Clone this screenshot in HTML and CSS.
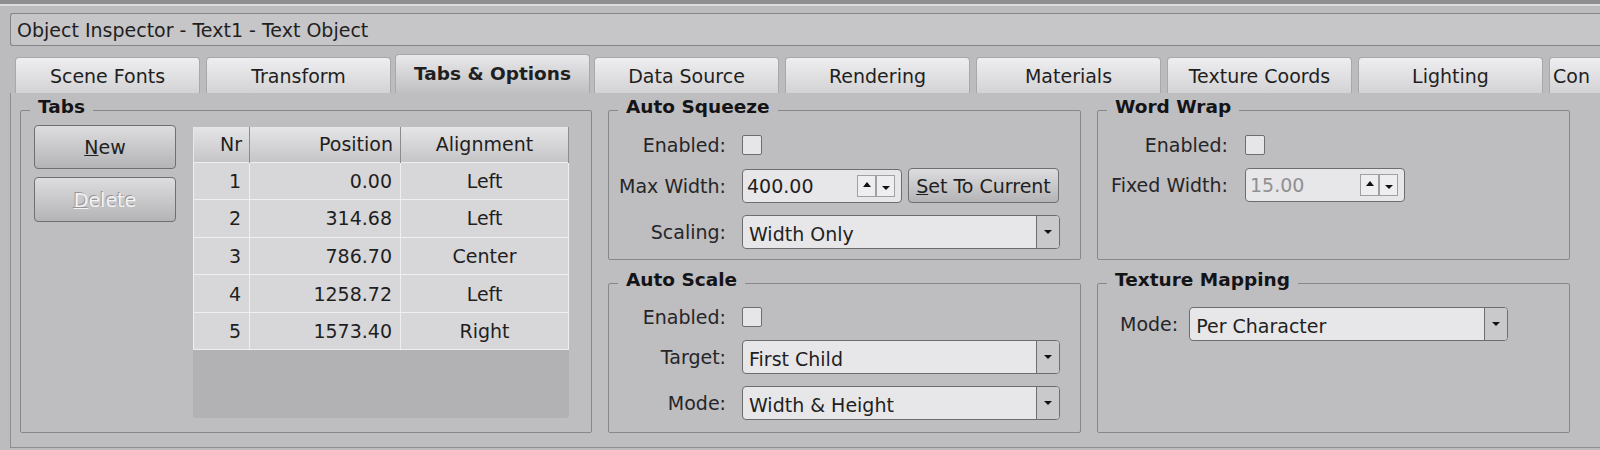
FILE: index.html
```html
<!DOCTYPE html>
<html lang="en">
<head>
	<meta charset="UTF-8">
	<title>Object Inspector</title>
	<link rel="stylesheet" href="styles.css">
</head>
<body>
	<div class="topline"></div>
	<div class="titlebar">Object Inspector - Text1 - Text Object</div>

	<ul class="tabs">
		<li class="tab">Scene Fonts</li>
		<li class="tab">Transform</li>
		<li class="tab active">Tabs &amp; Options</li>
		<li class="tab">Data Source</li>
		<li class="tab">Rendering</li>
		<li class="tab">Materials</li>
		<li class="tab">Texture Coords</li>
		<li class="tab">Lighting</li>
		<li class="tab last">Con</li>
	</ul>

	<div class="page">
		<fieldset class="group group-tabs">
			<legend>Tabs</legend>
			<div class="tabs-body">
				<div class="btn-col">
					<button class="btn"><u>N</u>ew</button>
					<button class="btn disabled"><u>D</u>elete</button>
				</div>
				<div class="grid">
					<table>
						<colgroup>
							<col class="c-nr">
							<col class="c-pos">
							<col class="c-al">
						</colgroup>
						<tr>
							<th class="r">Nr</th>
							<th class="r">Position</th>
							<th>Alignment</th>
						</tr>
						<tr><td class="r">1</td><td class="r">0.00</td><td>Left</td></tr>
						<tr><td class="r">2</td><td class="r">314.68</td><td>Left</td></tr>
						<tr><td class="r">3</td><td class="r">786.70</td><td>Center</td></tr>
						<tr><td class="r">4</td><td class="r">1258.72</td><td>Left</td></tr>
						<tr><td class="r">5</td><td class="r">1573.40</td><td>Right</td></tr>
					</table>
				</div>
			</div>
		</fieldset>

		<fieldset class="group squeeze">
			<legend>Auto Squeeze</legend>
			<div class="row first">
				<label class="lbl">Enabled:</label>
				<span class="check"></span>
			</div>
			<div class="row">
				<label class="lbl">Max Width:</label>
				<div class="spin">
					<span class="val">400.00</span>
					<span class="spin-btns"><span class="up"></span><span class="down"></span></span>
				</div>
				<button class="btn btn-set"><u>S</u>et To Current</button>
			</div>
			<div class="row">
				<label class="lbl">Scaling:</label>
				<div class="combo">
					<span class="val">Width Only</span>
					<span class="drop"></span>
				</div>
			</div>
		</fieldset>

		<fieldset class="group wrap">
			<legend>Word Wrap</legend>
			<div class="row first">
				<label class="lbl">Enabled:</label>
				<span class="check"></span>
			</div>
			<div class="row">
				<label class="lbl">Fixed Width:</label>
				<div class="spin off">
					<span class="val">15.00</span>
					<span class="spin-btns"><span class="up"></span><span class="down"></span></span>
				</div>
			</div>
		</fieldset>

		<fieldset class="group scale">
			<legend>Auto Scale</legend>
			<div class="row first">
				<label class="lbl">Enabled:</label>
				<span class="check"></span>
			</div>
			<div class="row">
				<label class="lbl">Target:</label>
				<div class="combo">
					<span class="val">First Child</span>
					<span class="drop"></span>
				</div>
			</div>
			<div class="row">
				<label class="lbl">Mode:</label>
				<div class="combo">
					<span class="val">Width &amp; Height</span>
					<span class="drop"></span>
				</div>
			</div>
		</fieldset>

		<fieldset class="group mapping">
			<legend>Texture Mapping</legend>
			<div class="row first">
				<label class="lbl">Mode:</label>
				<div class="combo">
					<span class="val">Per Character</span>
					<span class="drop"></span>
				</div>
			</div>
		</fieldset>
	</div>
</body>
</html>
```

FILE: styles.css
```css
* {
	margin: 0;
	padding: 0;
	box-sizing: border-box;
}
body {
	width: 1600px;
	height: 450px;
	overflow: hidden;
	background: #bcbbbe;
	font-family: "DejaVu Sans", sans-serif;
	font-size: 19px;
	color: #1f1f21;
}
.topline {
	height: 6px;
	background: #8e8e90;
	border-bottom: 2px solid #dcdcde;
}
.titlebar {
	margin: 7px 0 0 10px;
	height: 33px;
	padding: 1px 0 0 6px;
	line-height: 31px;
	background: #c6c5c8;
	border: 1px solid #858587;
	border-right: 0;
	border-radius: 3px 0 0 3px;
}

/* tab strip */
.tabs {
	display: flex;
	align-items: flex-end;
	height: 39px;
	margin-top: 8px;
	padding-left: 15px;
	overflow: hidden;
	list-style: none;
}
.tab {
	flex: none;
	width: 185px;
	height: 36px;
	margin-right: 6px;
	line-height: 36px;
	text-align: center;
	white-space: nowrap;
	background: linear-gradient(#eeeef0, #d3d3d5);
	border: 1px solid #a8a8aa;
	border-bottom: 0;
	border-radius: 4px 4px 0 0;
}
.tab.active {
	width: 195px;
	height: 39px;
	margin: 0 4px 0 -2px;
	line-height: 38px;
	font-size: 18.5px;
	font-weight: bold;
	background: linear-gradient(#e9e9eb, #c0bfc2);
}
.tab.last {
	flex: 1;
	text-align: left;
	padding-left: 3px;
	margin-right: 0;
	border-radius: 4px 0 0 0;
	border-right: 0;
}

/* page with group boxes */
.page {
	display: grid;
	grid-template-columns: 572px 473px 473px;
	grid-template-rows: 163px 163px;
	column-gap: 16px;
	row-gap: 10px;
	height: 355px;
	margin-left: 10px;
	padding: 4px 0 0 9px;
	background: #bebdc0;
	border-left: 1px solid #8e8e90;
	border-bottom: 1px solid #8e8e90;
}
.group {
	min-width: 0;
	border: 1px solid #88888a;
	border-radius: 2px;
}
.group legend {
	margin-left: 9px;
	padding: 0 8px 6px;
	font-size: 18.5px;
	line-height: 20px;
	font-weight: bold;
	color: #141416;
}
.group-tabs {
	grid-row: 1 / 3;
	display: flex;
	flex-direction: column;
}
.tabs-body {
	flex: 1;
	display: flex;
	gap: 17px;
	padding: 2px 22px 14px 13px;
}
.btn {
	display: block;
	width: 142px;
	height: 44px;
	margin-bottom: 8px;
	font: inherit;
	color: inherit;
	background: linear-gradient(#dddddf, #b4b3b6);
	border: 1px solid #6f6f71;
	border-radius: 4px;
}
.btn.disabled {
	height: 45px;
	color: #f3f3f4;
	text-shadow: -1px -1px 0 #959597;
}

/* tab list grid */
.grid {
	width: 376px;
	margin-top: 2px;
	background: #b2b1b4;
	border-radius: 0 0 3px 3px;
}
table {
	width: 100%;
	border-collapse: collapse;
}
.c-nr { width: 56px; }
.c-pos { width: 151px; }
th {
	height: 35px;
	padding: 0 7px;
	font-weight: normal;
	background: linear-gradient(#e5e5e7, #c5c5c7);
	border-right: 1px solid #8c8c8e;
	border-left: 1px solid #e8e8ea;
}
td {
	height: 37.6px;
	padding: 0 8px;
	text-align: center;
	background: #d7d6d9;
	border: 1px solid #efeff1;
}
th.r,
td.r {
	text-align: right;
}

/* form rows */
.row {
	display: flex;
	align-items: center;
	margin-top: 12px;
}
.squeeze .row.first,
.wrap .row.first,
.mapping .row.first {
	margin-top: 11px;
}
.scale .row.first {
	margin-top: 10px;
}
.lbl {
	flex: none;
	width: 117px;
	margin-right: 16px;
	text-align: right;
	color: #262628;
	white-space: nowrap;
}
.wrap .lbl {
	width: 130px;
	margin-right: 17px;
}
.mapping .row {
	padding-left: 22px;
}
.mapping .lbl {
	width: auto;
	margin-right: 11px;
}
.check {
	width: 20px;
	height: 20px;
	background: #e6e5e8;
	border: 1px solid #6e6e70;
	border-radius: 2px;
}
.spin {
	display: flex;
	align-items: center;
	width: 160px;
	height: 34px;
	padding: 0 6px 0 4px;
	background: #e7e6e9;
	border: 1px solid #6d6d6f;
	border-radius: 4px;
}
.spin .val {
	flex: 1;
}
.spin.off .val {
	color: #909092;
}
.spin-btns {
	display: flex;
	height: 22px;
}
.spin-btns span {
	display: flex;
	align-items: center;
	justify-content: center;
	width: 19px;
	background: #eeeef0;
	border: 1px solid #a0a0a2;
}
.spin-btns .up::before {
	content: "";
	border-left: 4px solid transparent;
	border-right: 4px solid transparent;
	border-bottom: 5px solid #111;
	margin-bottom: 3px;
}
.spin-btns .down::before {
	content: "";
	border-left: 4px solid transparent;
	border-right: 4px solid transparent;
	border-top: 4px solid #111;
	margin-top: 4px;
}
.btn-set {
	width: 151px;
	height: 35px;
	margin: 0 0 0 6px;
	white-space: nowrap;
}
.combo {
	display: flex;
	width: 318px;
	height: 34px;
	background: #e7e6e9;
	border: 1px solid #6d6d6f;
	border-radius: 4px;
}
.mapping .combo {
	width: 319px;
}
.combo .val {
	flex: 1;
	padding: 3px 0 0 6px;
	line-height: 30px;
}
.combo .drop {
	display: flex;
	align-items: center;
	justify-content: center;
	width: 23px;
	background: #c9c8cb;
	border-left: 1px solid #6d6d6f;
	border-radius: 0 3px 3px 0;
}
.combo .drop::before {
	content: "";
	border-left: 4px solid transparent;
	border-right: 4px solid transparent;
	border-top: 4px solid #111;
}
```
